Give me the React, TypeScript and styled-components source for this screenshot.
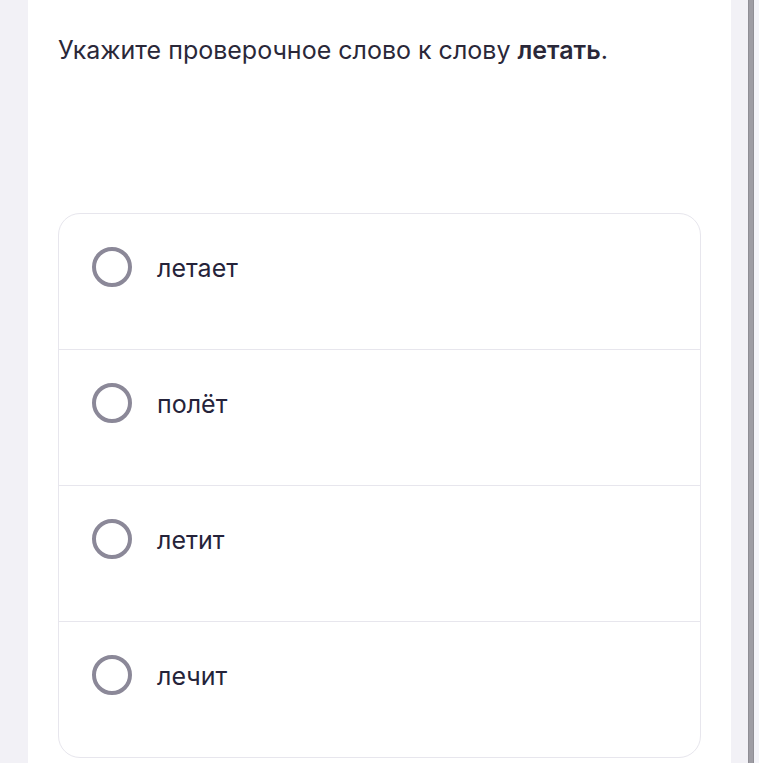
import React from "react";
import styled, { createGlobalStyle } from "styled-components";

const Global = createGlobalStyle`
  html, body { margin: 0; padding: 0; }
  body {
    background: #f2f1f6;
    font-family: Inter, "Noto Sans", sans-serif;
    overflow: hidden;
  }
`;

const Page = styled.div`
  display: flex;
  height: 763px;
  width: 759px;
  overflow: hidden;
`;

const Gutter = styled.div`
  width: 28px;
  flex: none;
`;

const Panel = styled.main`
  width: 703px;
  flex: none;
  background: #ffffff;
  padding: 35px 30px 0 30px;
  box-sizing: border-box;
`;

const Question = styled.p`
  margin: 0;
  font-size: 25px;
  line-height: 30px;
  color: #2a2839;
  b {
    font-weight: 600;
  }
`;

const Options = styled.div`
  margin-top: 148px;
  border: 1px solid #e7e6ed;
  border-radius: 22px;
  overflow: hidden;
  display: flex;
  flex-direction: column;
`;

const Option = styled.label`
  display: flex;
  align-items: flex-start;
  gap: 25px;
  height: 136px;
  box-sizing: border-box;
  padding: 33px 33px 0 33px;
  border-top: 1px solid #e7e6ed;
  &:first-child {
    border-top: none;
    height: 135px;
  }
  cursor: pointer;
`;

const Radio = styled.span`
  width: 40px;
  height: 40px;
  flex: none;
  box-sizing: border-box;
  border: 4px solid #8b8898;
  border-radius: 50%;
`;

const OptionText = styled.span`
  font-size: 25px;
  line-height: 42px;
  color: #25233a;
`;

const Track = styled.div`
  width: 17px;
  flex: none;
`;

const Thumb = styled.div`
  width: 6px;
  flex: none;
  background: #9e9da4;
  border-left: 1px solid #8f8e95;
  border-right: 1px solid #8f8e95;
  box-sizing: border-box;
`;

const TrackEdge = styled.div`
  flex: 1;
  background: #f4f4f9;
`;

const options = ["летает", "полёт", "летит", "лечит"];

export default function App() {
  return (
    <>
      <Global />
      <Page>
        <Gutter />
        <Panel>
          <Question>
            Укажите проверочное слово к слову <b>летать</b>.
          </Question>
          <Options>
            {options.map((o) => (
              <Option key={o}>
                <Radio />
                <OptionText>{o}</OptionText>
              </Option>
            ))}
          </Options>
        </Panel>
        <Track />
        <Thumb />
        <TrackEdge />
      </Page>
    </>
  );
}
